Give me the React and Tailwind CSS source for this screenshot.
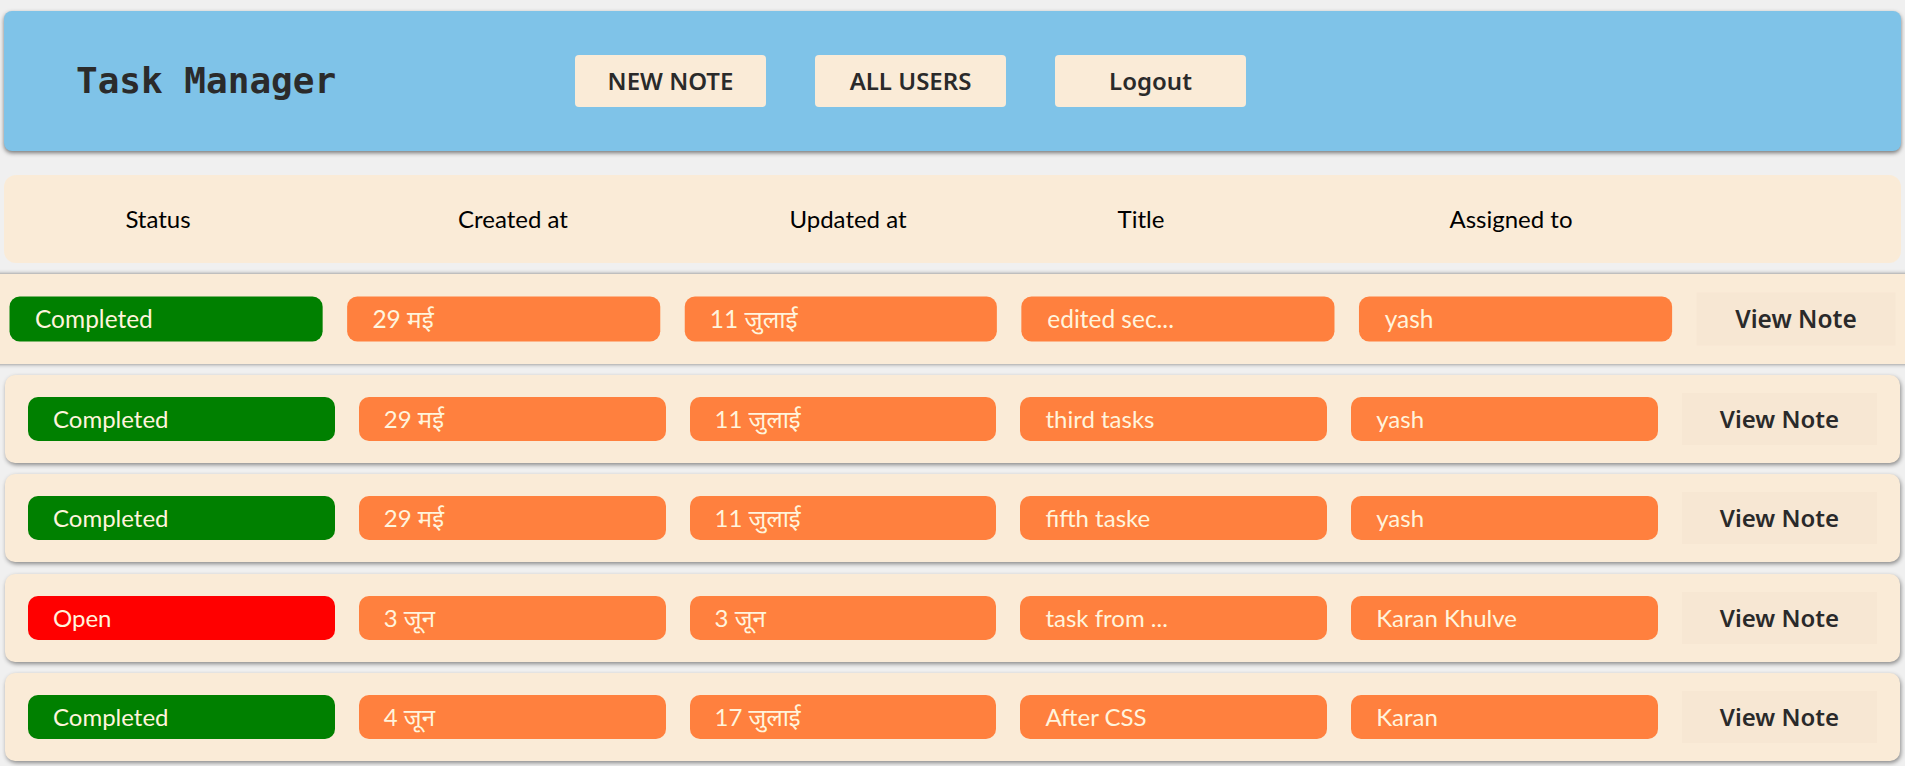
import React from 'react';

const tasks = [
    { status: 'Completed', created: '29 मई', updated: '11 जुलाई', title: 'edited sec...', assigned: 'yash' },
    { status: 'Completed', created: '29 मई', updated: '11 जुलाई', title: 'third tasks', assigned: 'yash' },
    { status: 'Completed', created: '29 मई', updated: '11 जुलाई', title: 'fifth taske', assigned: 'yash' },
    { status: 'Open', created: '3 जून', updated: '3 जून', title: 'task from ...', assigned: 'Karan Khulve' },
    { status: 'Completed', created: '4 जून', updated: '17 जुलाई', title: 'After CSS', assigned: 'Karan' },
];

const rowFont = { fontFamily: 'Lato, "Noto Sans", sans-serif' };

const Pill = ({ children, color }) => (
    <div className={`flex-1 h-[44px] rounded-[10px] flex items-center px-[25px] text-[24px] text-[#fff4dc] ${color}`}>
        {children}
    </div>
);

const TaskRow = ({ task, hovered }) => (
    <div
        className={`h-[88px] rounded-[10px] bg-[#faebd7] flex items-center px-[23px] gap-[24px] transition-transform ${
            hovered ? 'scale-[1.02] shadow-[0_0_4px_#777]' : 'shadow-[1px_2px_4px_#8a8a8a]'
        }`}
        style={rowFont}
    >
        <Pill color={task.status === 'Open' ? 'bg-[#ff0000]' : 'bg-[#008000]'}>{task.status}</Pill>
        <Pill color="bg-[#ff803e]">{task.created}</Pill>
        <Pill color="bg-[#ff803e]">{task.updated}</Pill>
        <Pill color="bg-[#ff803e]">{task.title}</Pill>
        <Pill color="bg-[#ff803e]">{task.assigned}</Pill>
        <button className="w-[195px] h-[52px] shrink-0 bg-[#f7e7d3] text-[#2a2a2a] text-[24px] font-semibold font-['Noto_Sans',sans-serif]">
            View Note
        </button>
    </div>
);

const App = () => {
    return (
        <div className="min-h-screen overflow-x-hidden bg-[#f0f0f0] pt-[11px]">

            {/* Top bar */}
            <div className="mx-[4px] h-[140px] rounded-[8px] bg-[#7fc3e8] shadow-[0_2px_4px_#777] flex items-center pl-[72px]">
                <h1 className="w-[259px] text-[36px] font-bold text-[#2b2b2b] font-['DejaVu_Sans_Mono',monospace] leading-none whitespace-nowrap">
                    Task Manager
                </h1>
                <div className="ml-[240px] flex gap-[49px]">
                    {['NEW NOTE', 'ALL USERS', 'Logout'].map((label) => (
                        <button
                            key={label}
                            className="w-[191px] h-[52px] rounded-[4px] bg-[#faebd7] text-[#2a2a2a] text-[24px] font-semibold font-['Noto_Sans',sans-serif]"
                        >
                            {label}
                        </button>
                    ))}
                </div>
            </div>

            {/* Column headings */}
            <div
                className="mx-[4px] mt-[24px] h-[88px] rounded-[12px] bg-[#faebd7] flex items-center text-[24px] text-black"
                style={rowFont}
            >
                <div className="w-[308px] text-center">Status</div>
                <div className="w-[402px] text-center">Created at</div>
                <div className="w-[268px] text-center">Updated at</div>
                <div className="w-[318px] text-center">Title</div>
                <div className="w-[422px] text-center">Assigned to</div>
            </div>

            {/* Task rows */}
            <div className="mt-[12px] px-[5px] flex flex-col gap-[11.5px]">
                {tasks.map((task, i) => (
                    <TaskRow key={i} task={task} hovered={i === 0} />
                ))}
            </div>
        </div>
    );
};

export default App;
